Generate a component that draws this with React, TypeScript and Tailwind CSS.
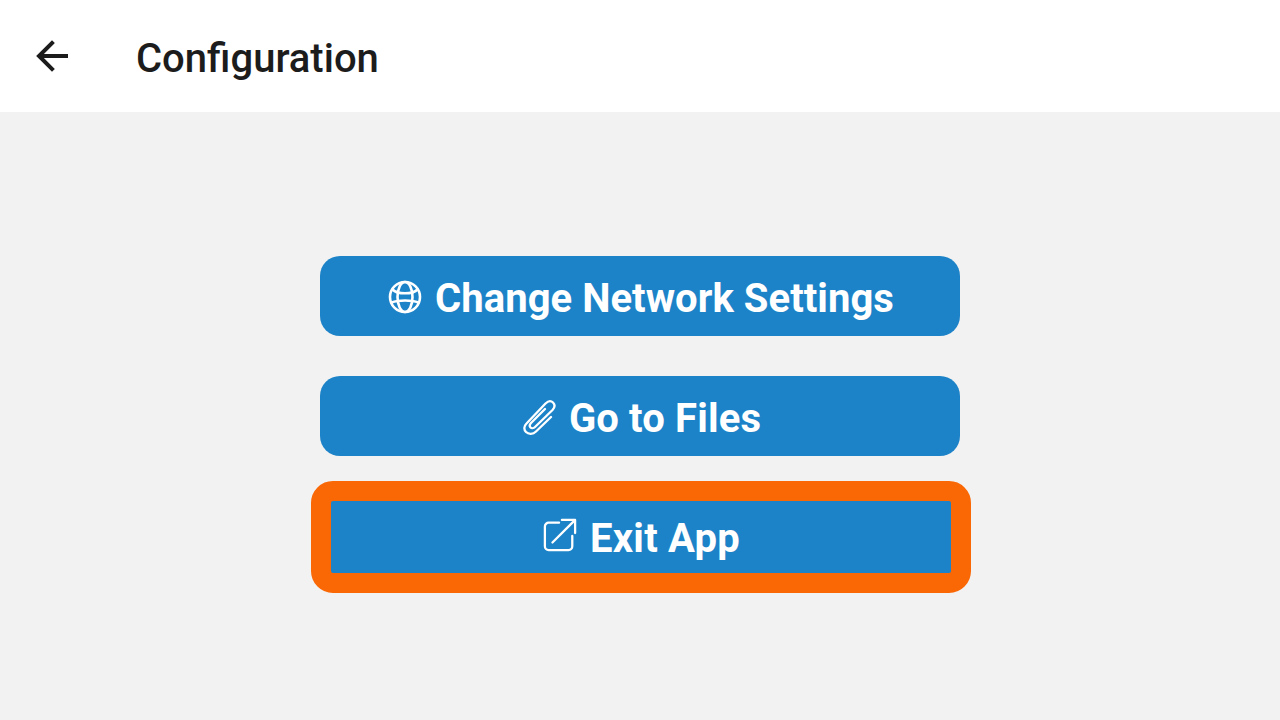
import React from "react";

const iconClass = "shrink-0 fill-none stroke-white";

function Globe() {
  return (
    <svg width="36" height="36" viewBox="0 0 36 36" className={`mt-[2px] ${iconClass}`} strokeWidth="2.600" strokeLinecap="round">
      <circle cx="18" cy="18" r="15" />
      <ellipse cx="18" cy="18" rx="7.500" ry="15" />
      <path d="M5.500 10.500c3 3.200 7.500 3.800 12.500 3.800s9.500-.6 12.500-3.800M4.500 23.500c4-1.500 8.500-2 13.500-2s9.500.5 13.500 2" />
    </svg>
  );
}

function Clip() {
  return (
    <svg width="34" height="38" viewBox="0 0 34 38" className={`mt-[2px] ${iconClass}`} strokeWidth="2.300" strokeLinecap="round" strokeLinejoin="round">
      <path d="M28 19 13 33.500c-3 3-7.500 3-10 .5-2.500-2.500-2-6 .5-8.500L22.500 5.500c2.500-2.500 5.500-3 7.500-1s1.800 5-.5 7.500L12 29c-1.500 1.500-3.500 1.500-4.500.5s-.8-3 .5-4.500L22 11" />
    </svg>
  );
}

function External() {
  return (
    <svg width="34" height="34" viewBox="0 0 36 36" className={`mt-[-4px] ${iconClass}`} strokeWidth="2.400" strokeLinecap="round" strokeLinejoin="round">
      <path d="M17 5H6a4 4 0 0 0-4 4v21a4 4 0 0 0 4 4h21a4 4 0 0 0 4-4V19" />
      <path d="M10 26 33 3M20 2h14v14" />
    </svg>
  );
}

export default function App() {
  return (
    <div className="flex h-[720px] w-[1280px] flex-col overflow-hidden bg-[#f2f2f2] font-['Roboto',sans-serif]">
      <header className="flex h-[112px] items-center bg-white">
        <svg width="34" height="32" viewBox="0 0 34 32" className="ml-[36px] shrink-0 fill-none stroke-[#1c1c1c]" strokeWidth="4" strokeLinecap="square">
          <path d="M30 16H4M16 3 3 16 16 29" />
        </svg>
        <h1 className="ml-[66px] pt-[6px] text-[40px] leading-none font-medium text-[#1c1c1c]">Configuration</h1>
      </header>
      <main className="flex flex-col items-center pt-[144px]">
        <button className="flex h-[80px] w-[640px] items-center justify-center gap-[12px] rounded-[20px] bg-[#1d83c8] pl-[1px] text-[40px] font-bold tracking-[0.05px] text-white">
          <Globe />
          <span className="pt-[6px]">Change Network Settings</span>
        </button>
        <button className="mt-[40px] flex h-[80px] w-[640px] items-center justify-center gap-[12px] rounded-[20px] bg-[#1d83c8] pl-[4px] text-[40px] font-bold tracking-[0.15px] text-white">
          <Clip />
          <span className="pt-[6px]">Go to Files</span>
        </button>
        <button className="mt-[25px] ml-[2px] flex h-[112px] w-[660px] items-center justify-center gap-[13px] rounded-[22px] border-[20px] border-[#fa6705] bg-[#1d83c8] pl-[1px] text-[40px] font-bold tracking-[0.2px] text-white">
          <External />
          <span className="pt-[4px]">Exit App</span>
        </button>
      </main>
    </div>
  );
}
